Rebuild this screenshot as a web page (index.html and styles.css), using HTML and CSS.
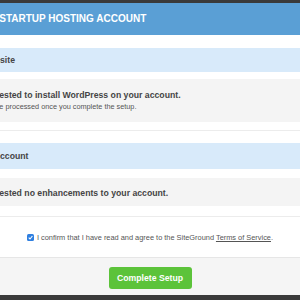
FILE: index.html
```html
<!DOCTYPE html>
<html lang="en">
<head>
    <meta charset="UTF-8">
    <meta name="viewport" content="width=device-width, initial-scale=1.0">
    <title>Complete Setup</title>
    <link rel="stylesheet" href="styles.css">
</head>
<body>
    <div class="panel">
        <div class="panel-header">SET UP YOUR STARTUP HOSTING ACCOUNT</div>

        <div class="panel-body">
            <div class="group">
                <div class="group-title">Your New Website</div>
                <div class="group-box">
                    <p class="main">You have requested to install WordPress on your account.</p>
                    <p class="note">Your request will be processed once you complete the setup.</p>
                </div>
            </div>

            <div class="group">
                <div class="group-title tall">Enhance Your Account</div>
                <div class="group-box short">
                    <p class="main">You have requested no enhancements to your account.</p>
                </div>
            </div>

            <div class="confirm">
                <span class="check">
                    <svg width="7" height="7" viewBox="0 0 7 7">
                        <rect width="7" height="7" rx="1.5" fill="#2f7fe0"/>
                        <path d="M1.7 3.7 L3 5 L5.4 2" fill="none" stroke="#fff" stroke-width="1.1"/>
                    </svg>
                </span>
                <span>I confirm that I have read and agree to the SiteGround <a href="#">Terms of Service</a>.</span>
            </div>
        </div>

        <div class="panel-footer">
            <button class="btn-complete">Complete Setup</button>
        </div>
    </div>
</body>
</html>
```

FILE: styles.css
```css
* {
    margin: 0;
    padding: 0;
    box-sizing: border-box;
}

html, body {
    height: 300px;
    overflow: hidden;
}

body {
    font-family: 'Liberation Sans', Arial, sans-serif;
    background: #3a3a3a;
    padding-top: 3px;
    color: #444;
}

.panel {
    width: 374px;
    height: 292px;
    margin-left: -74px;
    background: #fff;
}

.panel-header {
    height: 32px;
    line-height: 32px;
    padding-left: 3px;
    background: #5a9fd5;
    color: #fff;
    font-size: 10px;
    font-weight: bold;
}

.panel-body {
    padding-top: 13px;
}

.group {
    padding-bottom: 8px;
    border-bottom: 1px solid #ececec;
}

.group + .group {
    padding-top: 12px;
    padding-bottom: 10px;
}

.group-title {
    height: 24px;
    line-height: 24px;
    padding-left: 14px;
    background: #d8eafa;
    font-size: 8.7px;
    font-weight: bold;
    margin-bottom: 7px;
}

.group-title.tall {
    height: 26px;
    line-height: 26px;
    padding-left: 8px;
    margin-bottom: 9px;
}

.group-box {
    height: 43px;
    padding: 10px 0 0 14px;
    background: #f4f4f4;
}

.group-box.short {
    height: 28px;
    padding-top: 9px;
}

.main {
    font-size: 8.7px;
    font-weight: bold;
    line-height: 12px;
}

.note {
    font-size: 7.3px;
    line-height: 12px;
    color: #555;
}

.confirm {
    height: 40px;
    padding-left: 74px;
    display: flex;
    align-items: center;
    justify-content: center;
    gap: 3px;
    font-size: 7.4px;
    color: #555;
}

.check {
    display: flex;
}

.confirm a {
    color: #555;
}

.panel-footer {
    height: 38px;
    padding: 9px 0 0 74px;
    border-top: 1px solid #e6e6e6;
    background: #f5f5f5;
    display: flex;
    justify-content: center;
    align-items: flex-start;
}

.btn-complete {
    width: 83px;
    height: 22px;
    border: none;
    border-radius: 3px;
    background: #5cc33a;
    color: #fff;
    font-family: inherit;
    font-size: 8.7px;
    font-weight: bold;
}
```
